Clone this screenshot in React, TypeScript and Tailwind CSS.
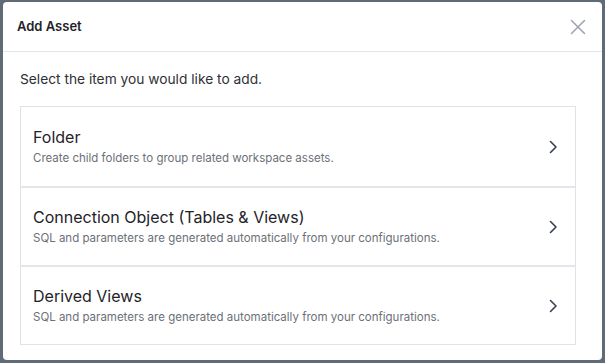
import React from "react";

const items = [
  { title: "Folder", desc: "Create child folders to group related workspace assets." },
  { title: "Connection Object (Tables & Views)", desc: "SQL and parameters are generated automatically from your configurations." },
  { title: "Derived Views", desc: "SQL and parameters are generated automatically from your configurations." },
];

function Chevron() {
  return (
    <svg width="16" height="16" viewBox="0 0 16 16" fill="none" className="shrink-0">
      <path d="M5.5 2.5 L11 8 L5.5 13.5" stroke="#374151" strokeWidth="1.6" strokeLinecap="round" strokeLinejoin="round" />
    </svg>
  );
}

export default function App() {
  return (
    <div className="w-[605px] h-[363px] bg-[#5f6b77] pt-[2px] pl-[3px] pr-[3px] pb-[3px]" style={{ fontFamily: "Inter, 'Noto Sans', sans-serif" }}>
      <div className="w-full h-full bg-white rounded-[4px] flex flex-col overflow-hidden">
        <div className="h-[50px] flex items-center justify-between pl-[14px] pr-[14px] border-b border-[#e2e5e9]">
          <div className="text-[13px] font-semibold text-[#1f2328]">Add Asset</div>
          <svg width="20" height="20" viewBox="0 0 20 20" fill="none">
            <path d="M3.5 3.5 L16.5 16.5 M16.5 3.5 L3.5 16.5" stroke="#9ca3af" strokeWidth="1.5" strokeLinecap="round" />
          </svg>
        </div>
        <div className="pl-[17px] pr-[26px] pt-[17px]">
          <div className="text-[13.75px] text-[#2d3136] leading-[20px]">Select the item you would like to add.</div>
          <div className="mt-[17px] border border-[#dfe2e6]">
            {items.map((it, i) => (
              <div key={i} className={`h-[79px] flex items-center justify-between pl-[12px] pr-[14px] ${i > 0 ? "border-t-2 border-[#e3e6ea]" : ""}`}>
                <div className="flex flex-col gap-[3px]">
                  <div className="text-[16px] text-[#1f2328] leading-[20px]">{it.title}</div>
                  <div className="text-[11.5px] text-[#6b7078] leading-[16px]">{it.desc}</div>
                </div>
                <Chevron />
              </div>
            ))}
          </div>
        </div>
      </div>
    </div>
  );
}
